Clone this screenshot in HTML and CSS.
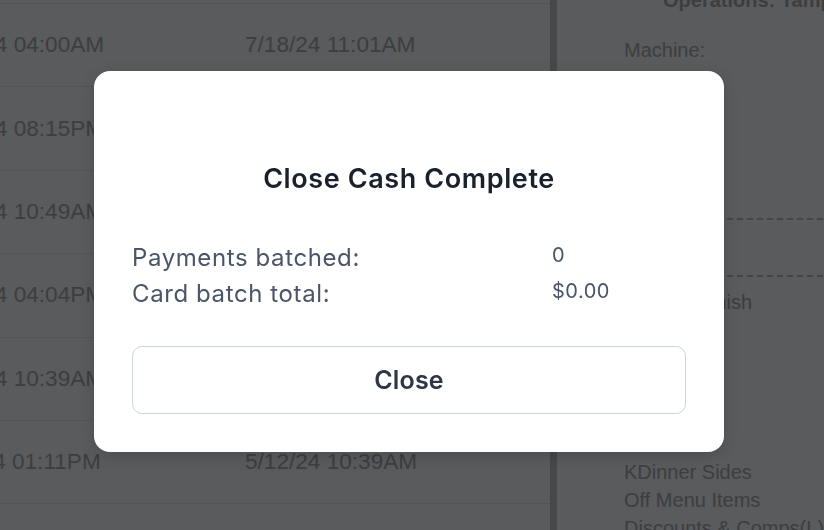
FILE: index.html
```html
<!DOCTYPE html>
<html lang="en">
<head>
<meta charset="utf-8">
<title>Close Cash Complete</title>
<link rel="stylesheet" href="styles.css">
</head>
<body>
<div class="page">
  <main class="table">
    <div class="rows">
      <div class="row"><span>7/17/24 04:00AM</span><span>7/18/24 11:01AM</span></div>
      <div class="row"><span>7/16/24 08:15PM</span><span>7/17/24 09:02AM</span></div>
      <div class="row"><span>6/29/24 10:49AM</span><span>7/01/24 08:10AM</span></div>
      <div class="row"><span>6/14/24 04:04PM</span><span>6/15/24 10:20AM</span></div>
      <div class="row"><span>5/29/24 10:39AM</span><span>5/30/24 07:45AM</span></div>
      <div class="row"><span>5/11/24 01:11PM</span><span>5/12/24 10:39AM</span></div>
      <div class="row"><span>5/02/24 09:30AM</span><span>5/03/24 11:15AM</span></div>
    </div>
  </main>
  <div class="divider"></div>
  <aside class="side">
    <div class="side-title">Operations: Tampa</div>
    <div class="side-line">Machine:</div>
    <div class="spacer-a"></div>
    <div class="dash"></div>
    <div class="spacer-b"></div>
    <div class="dash"></div>
    <div class="side-line shifted">Status: Finish</div>
    <div class="spacer-c"></div>
    <div class="side-line">KDinner Sides</div>
    <div class="side-line">Off Menu Items</div>
    <div class="side-line">Discounts &amp; Comps(L)</div>
  </aside>
</div>

<div class="overlay">
  <div class="modal" role="dialog" aria-labelledby="modal-title">
    <h2 class="modal-title" id="modal-title">Close Cash Complete</h2>
    <div class="summary">
      <div class="label">Payments batched:</div>
      <div class="value">0</div>
      <div class="label">Card batch total:</div>
      <div class="value">$0.00</div>
    </div>
    <button class="close-btn" type="button">Close</button>
  </div>
</div>
</body>
</html>
```

FILE: styles.css
```css
* { box-sizing: border-box; }

html, body {
  margin: 0;
  padding: 0;
  width: 824px;
  height: 530px;
  overflow: hidden;
  background: #595b5d;
}

body {
  font-family: "Liberation Sans", Arial, sans-serif;
  color: #3c3e40;
}

.page {
  display: flex;
  width: 824px;
  height: 530px;
}

.table {
  flex: 0 0 550px;
  overflow: hidden;
}

.rows {
  margin-left: -68px;
  padding-top: 3px;
}

.row {
  display: grid;
  grid-template-columns: 313px 1fr;
  align-items: center;
  height: 83.4px;
  border-top: 1px solid #525456;
  font-size: 22.6px;
  white-space: nowrap;
}

.divider {
  flex: 0 0 7px;
  background: #464849;
}

.side {
  flex: 1;
  font-size: 20px;
  line-height: 28px;
  white-space: nowrap;
  overflow: hidden;
}

.side-title {
  margin-top: -14px;
  padding-left: 106px;
  font-weight: bold;
}

.side-line {
  padding-left: 67px;
}

.side-title + .side-line {
  margin-top: 22px;
}

.shifted {
  padding-left: 74px;
  margin-top: 11px;
}

.spacer-a { height: 154px; }
.spacer-b { height: 55px; }
.spacer-c { height: 142px; }

.dash {
  height: 2px;
  background: repeating-linear-gradient(90deg, #434547 0 6px, transparent 6px 10px);
}

.overlay {
  position: fixed;
  inset: 0;
}

.modal {
  position: absolute;
  left: 94px;
  top: 71px;
  width: 630px;
  height: 381px;
  padding: 38px;
  background: #ffffff;
  border-radius: 16px;
  box-shadow: 0 4px 16px rgba(0, 0, 0, 0.15);
  font-family: Inter, "Noto Sans", sans-serif;
}

.modal-title {
  margin: 56px 0 47px;
  text-align: center;
  font-size: 27px;
  line-height: 28px;
  font-weight: 600;
  letter-spacing: 0.6px;
  color: #1a202c;
}

.summary {
  display: grid;
  grid-template-columns: 420px 1fr;
  grid-auto-rows: 36px;
}

.label {
  font-size: 24px;
  line-height: 36px;
  letter-spacing: 0.6px;
  color: #4a5568;
}

.value {
  font-size: 20px;
  line-height: 30px;
  letter-spacing: 0.5px;
  color: #4a5568;
}

.close-btn {
  display: block;
  width: 100%;
  height: 68px;
  margin-top: 34px;
  border: 1px solid #cbd5e0;
  border-radius: 10px;
  background: #ffffff;
  font-family: Inter, "Noto Sans", sans-serif;
  font-size: 25px;
  font-weight: 600;
  letter-spacing: 0.2px;
  color: #2d3748;
  cursor: pointer;
}
```
